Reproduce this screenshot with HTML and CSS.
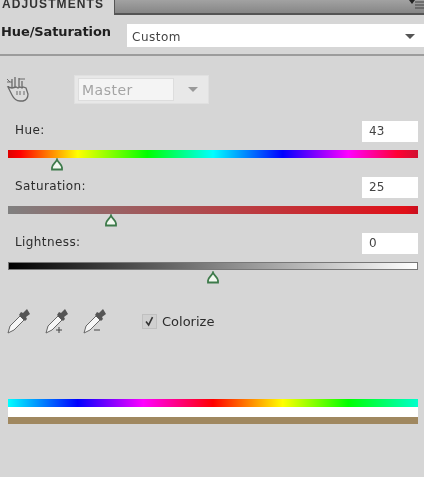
FILE: index.html
```html
<!DOCTYPE html>
<html lang="en">

<head>
	<meta charset="UTF-8">
	<meta name="viewport" content="width=device-width, initial-scale=1.0">
	<title>Hue/Saturation</title>
	<link rel="stylesheet" href="styles.css">
</head>

<body>
	<div class="panel">
		<div class="tabs">
			<div class="tab">ADJUSTMENTS</div>
			<svg class="tab-menu" width="16" height="12" viewBox="0 0 16 12">
				<path d="M1 0h6l-3 4z" fill="#222" />
				<path d="M7 2h9M7 5h9M7 8h9" stroke="#444" stroke-width="1.2" />
			</svg>
		</div>

		<div class="preset">
			<span class="preset-title">Hue/Saturation</span>
			<div class="preset-select">
				<span>Custom</span>
				<i class="arrow"></i>
			</div>
		</div>

		<div class="channel">
			<svg class="hand" width="28" height="28" viewBox="0 0 28 28" fill="none" stroke="#6a6a6a" stroke-width="1.3">
				<path d="M8 13V4M11 12V2M15 12V3M18 13V6" />
				<path d="M3 7h5M15 4h6M3 4l3 3M4 11l3 3" stroke-width="1" />
				<path d="M8 13l-4-1 4 8c2 4 4 6 8 6h3c4-1 5-4 5-7l-2-6-3-1-1 1-2-1-2 1-2-1z" fill="#dcdcdc" />
				<path d="M13 16v4M16 16v4M20 16v4" stroke-width="1" />
			</svg>
			<div class="channel-select">
				<span class="channel-value">Master</span>
				<i class="arrow arrow-light"></i>
			</div>
		</div>

		<div class="slider">
			<div class="slider-head">
				<label>Hue:</label>
				<span class="value">43</span>
			</div>
			<div class="track track-hue">
				<svg class="thumb" style="left: 12%" width="14" height="13" viewBox="0 0 14 13">
					<path d="M7 1.5c1 3 5 5 5 8v2H2v-2c0-3 4-5 5-8z" fill="#f2f8f0" stroke="#3d7a4a" stroke-width="1.8" />
				</svg>
			</div>
		</div>

		<div class="slider">
			<div class="slider-head">
				<label>Saturation:</label>
				<span class="value">25</span>
			</div>
			<div class="track track-sat">
				<svg class="thumb" style="left: 25%" width="14" height="13" viewBox="0 0 14 13">
					<path d="M7 1.5c1 3 5 5 5 8v2H2v-2c0-3 4-5 5-8z" fill="#f2f8f0" stroke="#3d7a4a" stroke-width="1.8" />
				</svg>
			</div>
		</div>

		<div class="slider">
			<div class="slider-head">
				<label>Lightness:</label>
				<span class="value">0</span>
			</div>
			<div class="track track-light">
				<svg class="thumb" style="left: 50%" width="14" height="13" viewBox="0 0 14 13">
					<path d="M7 1.5c1 3 5 5 5 8v2H2v-2c0-3 4-5 5-8z" fill="#f2f8f0" stroke="#3d7a4a" stroke-width="1.8" />
				</svg>
			</div>
		</div>

		<div class="tools">
			<svg class="dropper" width="26" height="26" viewBox="0 0 26 26">
				<path d="M2 25l2-7 10-10 4 4-10 10z" fill="#f6f6f6" stroke="#666" />
				<path d="M13 7l6 6 2-2-1-2 4-3-3-5-4 4-2-1z" fill="#555" />
			</svg>
			<svg class="dropper" width="26" height="26" viewBox="0 0 26 26">
				<path d="M2 25l2-7 10-10 4 4-10 10z" fill="#f6f6f6" stroke="#666" />
				<path d="M13 7l6 6 2-2-1-2 4-3-3-5-4 4-2-1z" fill="#555" />
				<path d="M12 22h6M15 19v6" stroke="#444" fill="none" />
			</svg>
			<svg class="dropper" width="26" height="26" viewBox="0 0 26 26">
				<path d="M2 25l2-7 10-10 4 4-10 10z" fill="#f6f6f6" stroke="#666" />
				<path d="M13 7l6 6 2-2-1-2 4-3-3-5-4 4-2-1z" fill="#555" />
				<path d="M12 22h6" stroke="#444" fill="none" />
			</svg>
			<div class="colorize">
				<svg class="check" width="15" height="15" viewBox="0 0 15 15">
					<path d="M3.5 7.5l3 4 4.5-9" fill="none" stroke="#333" stroke-width="1.8" />
				</svg>
				<span>Colorize</span>
			</div>
		</div>

		<div class="bars">
			<div class="bar-spectrum"></div>
			<div class="bar-white"></div>
			<div class="bar-tan"></div>
		</div>
	</div>
</body>

</html>
```

FILE: styles.css
```css
* {
	padding: 0;
	margin: 0;
	box-sizing: border-box;
}

html,
body {
	width: 424px;
	height: 477px;
	overflow: hidden;
	background: #d6d6d6;
}

.panel {
	height: 477px;
	background: #d6d6d6;
	color: #2c2c2c;
	font-family: "DejaVu Sans", "Liberation Sans", sans-serif;
	font-size: 12px;
	filter: blur(0.5px);
}

.tabs {
	display: flex;
	align-items: flex-end;
	justify-content: space-between;
	height: 15px;
	background: linear-gradient(#a2a2a2, #868686);
	border-bottom: 2px solid #555;
}

.tab {
	width: 115px;
	height: 15px;
	padding-left: 2px;
	margin-bottom: -2px;
	background: #d6d6d6;
	border-right: 1px solid #555;
	color: #333;
	font-family: "Liberation Sans", sans-serif;
	font-size: 12px;
	font-weight: bold;
	letter-spacing: 1.1px;
	line-height: 9px;
	overflow: hidden;
}

.tab-menu {
	align-self: flex-start;
}

.preset {
	display: flex;
	align-items: center;
	height: 41px;
	padding-top: 2px;
	border-bottom: 2px solid #9c9c9c;
}

.preset-title {
	width: 127px;
	padding: 0 0 9px 1px;
	font-weight: bold;
	font-size: 13px;
	letter-spacing: -0.1px;
	color: #1f1f1f;
	white-space: nowrap;
}

.preset-select {
	display: flex;
	align-items: center;
	justify-content: space-between;
	flex: 1;
	height: 23px;
	padding: 2px 9px 0 5px;
	background: #fff;
	color: #444;
	letter-spacing: 0.5px;
}

.arrow {
	width: 0;
	height: 0;
	border-left: 5px solid transparent;
	border-right: 5px solid transparent;
	border-top: 5px solid #555;
}

.arrow-light {
	border-top-color: #999;
	margin-right: 3px;
}

.channel {
	display: flex;
	align-items: center;
	height: 46px;
	margin-top: 19px;
	padding-left: 4px;
}

.hand {
	flex: none;
	margin-right: 42px;
	margin-top: -18px;
}

.channel-select {
	display: flex;
	align-items: center;
	justify-content: space-between;
	width: 135px;
	height: 29px;
	margin-top: -18px;
	padding: 2px 7px 2px 3px;
	background: #e8e8e8;
	border: 1px solid #e0e0e0;
}

.channel-value {
	width: 96px;
	height: 100%;
	padding-left: 3px;
	line-height: 22px;
	background: #f4f4f4;
	border: 1px solid #ddd;
	color: #a4a4a4;
	font-size: 14px;
	letter-spacing: 0.5px;
}

.slider {
	height: 56px;
	padding: 0 6px 0 8px;
}

.slider-head {
	display: flex;
	align-items: flex-start;
	justify-content: space-between;
	height: 29px;
}

.slider-head label {
	padding: 1px 0 0 7px;
	line-height: 16px;
	letter-spacing: 0.4px;
}

.value {
	width: 56px;
	height: 21px;
	padding-left: 7px;
	background: #fff;
	line-height: 21px;
	color: #444;
}

.track {
	position: relative;
	height: 8px;
}

.track-hue {
	background: linear-gradient(to right, #d00, #f00 3%, #ff0 17%, #0f0 34%, #0ff 50%, #00f 67%, #f0f 83%, #f03 95%, #d01030);
}

.track-sat {
	background: linear-gradient(to right, #808080, #e01018 97%, #c81020);
}

.track-light {
	background: linear-gradient(to right, #000, #808080 50%, #fff);
	border: 1px solid #777;
}

.thumb {
	position: absolute;
	top: 8px;
	margin-left: -7px;
}

.tools {
	display: flex;
	align-items: center;
	gap: 12px;
	height: 26px;
	margin-top: 19px;
	padding-left: 6px;
}

.dropper {
	flex: none;
}

.colorize {
	display: flex;
	align-items: center;
	gap: 5px;
	margin-left: 22px;
	font-size: 13px;
}

.check {
	background: #d0d0d0;
	border: 1px solid #c0c0c0;
}

.bars {
	margin: 65px 6px 0 8px;
}

.bar-spectrum {
	height: 8px;
	background: linear-gradient(to right, #0ff, #00f 17%, #f0f 33%, #f00 50%, #ff0 67%, #0f0 83%, #0fc);
}

.bar-white {
	height: 10px;
	background: #fff;
}

.bar-tan {
	height: 7px;
	background: #a08860;
}
```
